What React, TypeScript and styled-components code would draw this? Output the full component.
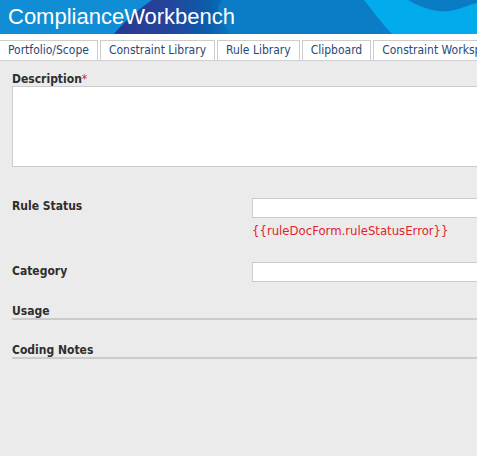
import React from 'react';
import styled, { createGlobalStyle } from 'styled-components';

const GlobalStyle = createGlobalStyle`
  html, body {
    margin: 0;
    padding: 0;
    overflow: hidden;
    background: #ebebeb;
  }
  body {
    font-family: "DejaVu Sans Condensed", "DejaVu Sans", sans-serif;
    font-stretch: condensed;
  }
`;

const Page = styled.div`
  min-height: 456px;
  background: #ebebeb;
`;

const Header = styled.div`
  position: relative;
  height: 34px;
  overflow: hidden;
  background: #0a7dc6;
`;

const HeaderArt = styled.svg`
  position: absolute;
  inset: 0;
  width: 100%;
  height: 100%;
`;

const Title = styled.h1`
  position: relative;
  margin: 0;
  padding: 4px 0 0 8px;
  font-family: "Liberation Sans", Arial, sans-serif;
  font-stretch: normal;
  font-size: 22px;
  font-weight: normal;
  line-height: 25px;
  color: #fff;
  white-space: nowrap;
`;

const TabBar = styled.div`
  display: flex;
  gap: 2px;
  padding-top: 6px;
  margin-left: -1px;
  background: #fff;
  border-bottom: 1px solid #cfcfcf;
  white-space: nowrap;
  overflow: hidden;
`;

const Tab = styled.div`
  flex-shrink: 0;
  height: 19px;
  line-height: 19px;
  padding: 0 8px;
  margin-bottom: -1px;
  border: 1px solid #cdcdcd;
  background: #fff;
  font-size: 12px;
  color: #1f4a78;
`;

const Form = styled.div`
  width: 660px;
  padding: 11px 0 0 12px;
`;

const Label = styled.div<{ $pad?: number }>`
  padding-top: ${(p) => p.$pad ?? 0}px;
  font-size: 12px;
  font-weight: bold;
  line-height: 14px;
  color: #2e2e2e;
`;

const FieldTitle = styled(Label)`
  line-height: 13px;
`;

const Required = styled.span`
  color: #c0392b;
  font-weight: normal;
`;

const TextArea = styled.div`
  box-sizing: border-box;
  height: 81px;
  background: #fff;
  border: 1px solid #cccccc;
`;

const Row = styled.div<{ $top: number }>`
  display: grid;
  grid-template-columns: 240px 1fr;
  align-items: start;
  margin-top: ${(p) => p.$top}px;
`;

const Field = styled.div`
  display: flex;
  flex-direction: column;
`;

const Input = styled.div`
  box-sizing: border-box;
  height: 20px;
  background: #fff;
  border: 1px solid #cccccc;
`;

const ErrorText = styled.div`
  margin-top: 5px;
  font-size: 13px;
  line-height: 15px;
  color: #e1232b;
`;

const Section = styled.div<{ $top: number }>`
  margin-top: ${(p) => p.$top}px;
  font-size: 12px;
  font-weight: bold;
  line-height: 13px;
  color: #2e2e2e;
  border-bottom: 2px solid #cbcbcb;
`;

const tabs = ['Portfolio/Scope', 'Constraint Library', 'Rule Library', 'Clipboard', 'Constraint Workspace'];

export default function App() {
  return (
    <Page>
      <GlobalStyle />
      <Header>
        <HeaderArt viewBox="0 0 477 34" preserveAspectRatio="none">
          <defs>
            <linearGradient id="navy" x1="0" x2="1" y1="0" y2="0">
              <stop offset="0" stopColor="#2b3891" />
              <stop offset="0.45" stopColor="#24449c" />
              <stop offset="0.8" stopColor="#0b5dab" />
              <stop offset="1" stopColor="#0a78c2" />
            </linearGradient>
          </defs>
          <rect width="477" height="34" fill="#0a7dc6" />
          <path d="M0,0 H152 C138,10 124,22 114,34 H0 Z" fill="#118dd5" />
          <path d="M152,0 C138,10 124,22 114,34 H232 C220,22 214,10 222,0 Z" fill="url(#navy)" />
          <path d="M364,0 C374,12 382,24 392,34 H477 V0 Z" fill="#02acec" />
          <path d="M408,0 C422,8 436,13 450,11 C462,9 470,4 477,3 V0 Z" fill="#0a7cc4" />
        </HeaderArt>
        <Title>ComplianceWorkbench</Title>
      </Header>
      <TabBar>
        {tabs.map((t) => (
          <Tab key={t}>{t}</Tab>
        ))}
      </TabBar>
      <Form>
        <FieldTitle $pad={1}>
          Description<Required>*</Required>
        </FieldTitle>
        <TextArea />
        <Row $top={31}>
          <Label $pad={1}>Rule Status</Label>
          <Field>
            <Input />
            <ErrorText>{'{{ruleDocForm.ruleStatusError}}'}</ErrorText>
          </Field>
        </Row>
        <Row $top={24}>
          <Label $pad={2}>Category</Label>
          <Input />
        </Row>
        <Section $top={23}>Usage</Section>
        <Section $top={24}>Coding Notes</Section>
      </Form>
    </Page>
  );
}
